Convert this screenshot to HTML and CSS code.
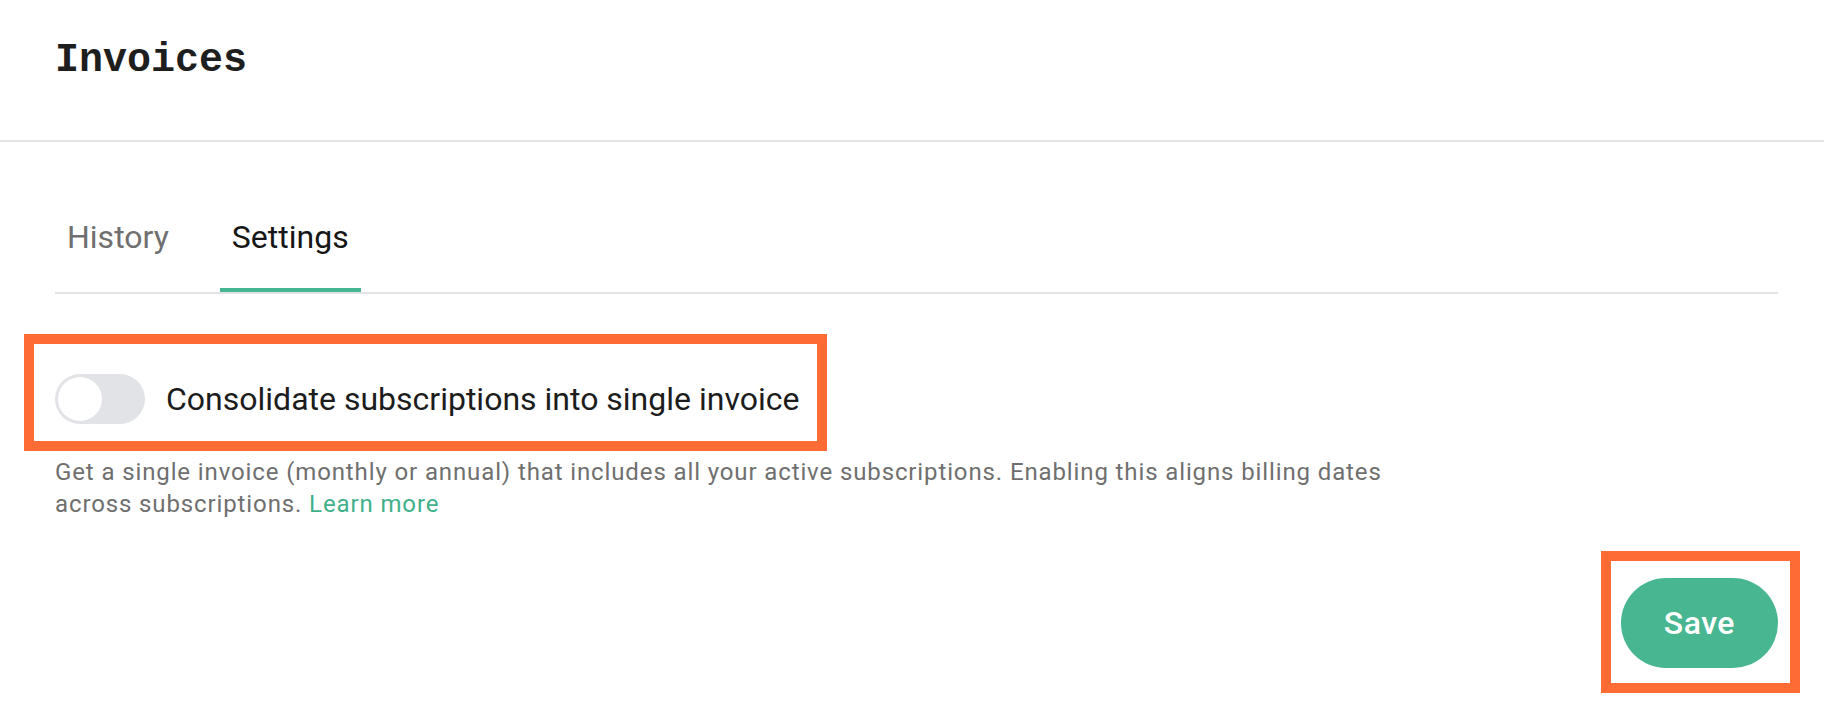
FILE: index.html
```html
<!DOCTYPE html>
<html lang="en">
<head>
<meta charset="utf-8">
<title>Invoices</title>
<link rel="stylesheet" href="styles.css">
</head>
<body>
<div class="page">
  <header class="page-header">
    <h1 class="page-title">Invoices</h1>
  </header>
  <main class="content">
    <nav class="tabs">
      <a class="tab" href="#">History</a>
      <a class="tab tab-active" href="#">Settings</a>
    </nav>
    <section class="setting">
      <div class="setting-row">
        <span class="toggle"><span class="toggle-knob"></span></span>
        <span class="setting-label">Consolidate subscriptions into single invoice</span>
      </div>
      <p class="setting-desc">Get a single invoice (monthly or annual) that includes all your active subscriptions. Enabling this aligns billing dates across subscriptions. <a class="link" href="#">Learn more</a></p>
    </section>
    <div class="actions">
      <button class="btn-save" type="button">Save</button>
    </div>
  </main>
  <div class="annot annot-toggle"></div>
  <div class="annot annot-save"></div>
</div>
</body>
</html>
```
FILE: styles.css
```css
* { box-sizing: border-box; }
html, body { margin: 0; padding: 0; background: #ffffff; }
body { font-family: Roboto, "Liberation Sans", sans-serif; color: #1c1c1c; }
.page { position: relative; min-height: 720px; }

.page-header {
  padding: 37px 55px 55px;
  border-bottom: 2px solid #e3e3e7;
}
.page-title {
  margin: 0;
  font-family: "Liberation Mono", "DejaVu Sans Mono", monospace;
  font-weight: 700;
  font-size: 40px;
  line-height: 48px;
  color: #1e1e1e;
}

.content { padding: 0 46px 0 55px; }

.tabs {
  display: flex;
  gap: 39px;
  margin-top: 75px;
  border-bottom: 2px solid #e3e3e7;
}
.tab {
  display: block;
  padding: 0 12px 31px;
  border-bottom: 4px solid transparent;
  font-size: 32px;
  line-height: 40px;
  color: #6f6f6f;
  text-decoration: none;
}
.tab-active {
  color: #161616;
  border-bottom-color: #45b592;
}

.setting { margin-top: 80px; }
.setting-row {
  display: flex;
  align-items: center;
  gap: 21px;
  height: 50px;
}
.toggle {
  display: flex;
  align-items: center;
  width: 90px;
  height: 50px;
  padding: 3px;
  border-radius: 25px;
  background: #e2e3e7;
  flex: none;
}
.toggle-knob {
  width: 44px;
  height: 44px;
  border-radius: 50%;
  background: #ffffff;
}
.setting-label {
  font-size: 32px;
  line-height: 40px;
  color: #1c1c1c;
}
.setting-desc {
  margin: 32px 0 0;
  max-width: 1370px;
  font-size: 24px;
  line-height: 32px;
  letter-spacing: 0.88px;
  color: #6f6f6f;
}
.link { color: #3fb08a; text-decoration: none; }

.actions {
  display: flex;
  justify-content: flex-end;
  margin-top: 58px;
}
.btn-save {
  height: 90px;
  padding: 0 43px;
  border: none;
  border-radius: 45px;
  background: #47b691;
  color: #ffffff;
  font-family: Roboto, "Liberation Sans", sans-serif;
  font-size: 32px;
  font-weight: 500;
  letter-spacing: 0.5px;
}

.annot {
  position: absolute;
  border: 10px solid #ff6b35;
  pointer-events: none;
}
.annot-toggle { left: 24px; top: 334px; width: 803px; height: 117px; }
.annot-save { left: 1601px; top: 551px; width: 199px; height: 142px; }
```
